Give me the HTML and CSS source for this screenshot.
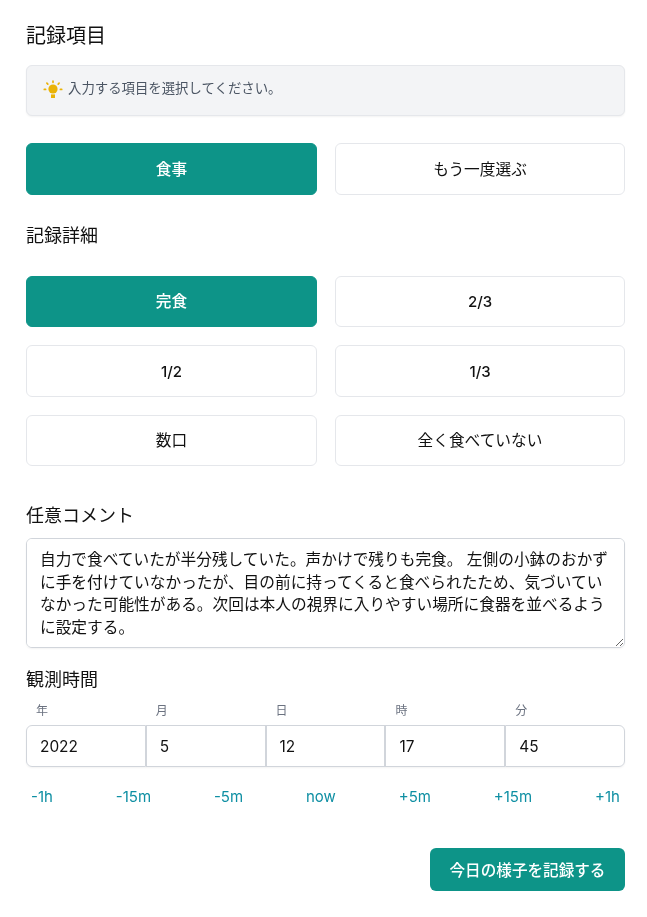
FILE: index.html
```html
<!DOCTYPE html>
<html lang="ja">
<head>
<meta charset="utf-8">
<title>記録項目</title>
<link rel="stylesheet" href="styles.css">
</head>
<body>
<main class="page">
  <h2 class="title">記録項目</h2>
  <div class="hint">
    <svg class="bulb" viewBox="0 0 20 20" aria-hidden="true">
      <circle cx="10" cy="9" r="4.6" fill="#eab308"/>
      <rect x="8" y="14.4" width="4" height="3.6" fill="#eab308"/>
      <g stroke="#eab308" stroke-width="1.7" stroke-linecap="round">
        <path d="M10 1v1.3M3.9 3.2l.9.9M16.1 3.2l-.9.9M1.3 9.4h1.3M17.4 9.4h1.3"/>
      </g>
    </svg>
    <span>入力する項目を選択してください。</span>
  </div>
  <div class="choices first">
    <button class="choice on">食事</button>
    <button class="choice">もう一度選ぶ</button>
  </div>
  <h3 class="label detail">記録詳細</h3>
  <div class="choices detail-grid">
    <button class="choice on">完食</button>
    <button class="choice num">2/3</button>
    <button class="choice num">1/2</button>
    <button class="choice num">1/3</button>
    <button class="choice">数口</button>
    <button class="choice">全く食べていない</button>
  </div>
  <h3 class="label comment">任意コメント</h3>
  <textarea class="note" rows="4">自力で食べていたが半分残していた。声かけで残りも完食。 左側の小鉢のおかずに手を付けていなかったが、目の前に持ってくると食べられたため、気づいていなかった可能性がある。次回は本人の視界に入りやすい場所に食器を並べるように設定する。</textarea>
  <h3 class="label time">観測時間</h3>
  <div class="units">
    <span>年</span><span>月</span><span>日</span><span>時</span><span>分</span>
  </div>
  <div class="fields">
    <input value="2022"><input value="5"><input value="12"><input value="17"><input value="45">
  </div>
  <div class="steps">
    <a>-1h</a><a>-15m</a><a>-5m</a><a>now</a><a>+5m</a><a>+15m</a><a>+1h</a>
  </div>
  <div class="actions">
    <button class="submit">今日の様子を記録する</button>
  </div>
</main>
</body>
</html>
```
FILE: styles.css
```css
* { box-sizing: border-box; }
html, body { margin: 0; background: #fff; }
body, button, input, textarea {
  font-family: Inter, "Noto Sans CJK JP", sans-serif;
  color: #111;
}
.page { width: 647px; height: 917px; padding: 24px 22px 0 26px; overflow: hidden; }
.title { margin: 0; font-size: 20px; font-weight: 400; line-height: 24px; }
.hint {
  margin-top: 17px; height: 51px; display: flex; align-items: center; gap: 5px;
  padding: 0 16px 7px; background: #f3f4f6; border: 1px solid #e5e7eb; border-radius: 6px;
  font-size: 13.4px; color: #4b5563; box-shadow: 0 1px 2px rgba(0,0,0,.05);
}
.bulb { width: 20px; height: 20px; flex: none; margin-top: 5px; }
.choices { display: grid; grid-template-columns: 291px 290px; column-gap: 18px; row-gap: 18.2px; }
.first { margin-top: 27px; }
.choice {
  height: 52px; background: #fff; border: 1px solid #e5e7eb; border-radius: 6px;
  font-size: 15.7px; font-weight: 400; padding: 0 0 2px;
}
.choice.num { font-size: 15px; font-weight: 500; padding: 0; }
.choice.on { background: #0d9488; border-color: #0d9488; color: #fff; font-weight: 500; }
.label { margin: 0; font-size: 18px; font-weight: 400; line-height: 24px; }
.detail { margin-top: 29px; }
.detail-grid { margin-top: 28px; }
.detail-grid .choice { height: 51.3px; }
.comment { margin-top: 38px; }
.note {
  display: block; width: 599px; height: 110px; margin-top: 10px; padding: 10px 13px;
  font-size: 15.7px; line-height: 22.5px; border: 1px solid #d1d5db; border-radius: 6px;
  box-shadow: 0 1px 2px rgba(0,0,0,.05); outline: none;
}
.time { margin-top: 20px; }
.units { display: grid; grid-template-columns: repeat(5, 119.8px); margin-top: 10px; font-size: 12px; line-height: 18px; color: #6b7280; }
.units span { padding-left: 10px; }
.fields { display: grid; grid-template-columns: repeat(5, 1fr); width: 599px; margin-top: 5px; border-radius: 6px; box-shadow: 0 1px 2px rgba(0,0,0,.05); }
.fields input {
  width: 100%; min-width: 0; height: 42px; padding: 0 13px; font-size: 15.4px;
  border: 1px solid #d1d5db; outline: none; background: #fff;
}
.fields input:first-child { border-radius: 6px 0 0 6px; }
.fields input:last-child { border-radius: 0 6px 6px 0; }
.steps { display: flex; justify-content: space-between; width: 599px; margin-top: 20px; padding: 0 5px; font-size: 15px; line-height: 20px; color: #0e8fa3; }
.actions { display: flex; justify-content: flex-end; width: 599px; margin-top: 41px; }
.submit {
  width: 195px; height: 43px; background: #0d9488; color: #fff; border: 0; border-radius: 6px;
  font-size: 15.6px; font-weight: 500; padding: 0 0 2px;
}
```
